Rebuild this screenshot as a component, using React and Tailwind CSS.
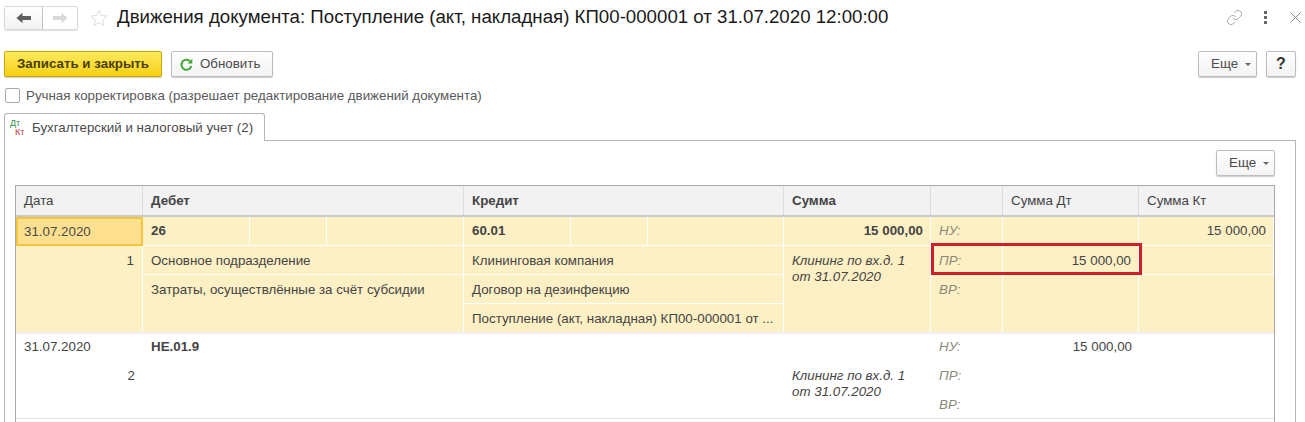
import React from "react";
import { Link as LinkIcon } from "lucide-react";

const gridCols = "grid grid-cols-[127px_321px_320px_147px_72px_136px_135px]";
const cell = "flex items-center px-2 border-r border-b border-white overflow-hidden whitespace-nowrap";

function Arrow({ dir, color }) {
  return (
    <svg width="16" height="12" viewBox="0 0 16 12" className={dir === "right" ? "rotate-180" : ""}>
      <path d="M0.5 6 L6.5 0.8 V4 H15 V8 H6.5 V11.2 Z" fill={color} />
    </svg>
  );
}

function MoreButton() {
  return (
    <button className="w-[59px] h-[26px] flex items-center pl-[12px] gap-[7px] border border-[#bdbdbd] rounded-[2px] bg-gradient-to-b from-white to-[#f3f3f3] shadow-[0_1px_1px_rgba(0,0,0,0.2)] text-[#4b4b4b]">
      Еще
      <span className="w-0 h-0 border-x-[3px] border-x-transparent border-t-[3px] border-t-[#666]" />
    </button>
  );
}

function Account({ col, code }) {
  return (
    <div className={`${col} row-start-1 grid grid-cols-[107px_77px_1fr] border-r border-b border-white`}>
      <div className="flex items-center pl-2 font-bold border-r border-white">{code}</div>
      <div className="border-r border-white" />
      <div />
    </div>
  );
}

export default function App() {
  return (
    <div className="w-[1305px] h-[422px] overflow-hidden bg-white text-[13.33px] text-[#444] font-['Liberation_Sans',Arial,sans-serif]">
      {/* title bar */}
      <div className="flex items-center h-[34px] pt-[1px] pl-1 pr-[4px]">
        <div className="flex w-[74px] h-[24px] border border-[#d9d9d9] rounded-[2px] shadow-[0_1px_1px_rgba(0,0,0,0.12)]">
          <div className="w-[38px] flex items-center justify-center border-r border-[#c4c4c4] bg-gradient-to-b from-white to-[#f2f2f2]">
            <Arrow color="#5f5f5f" />
          </div>
          <div className="flex-1 flex items-center justify-center">
            <Arrow dir="right" color="#d8d8d8" />
          </div>
        </div>
        <svg width="18" height="18" viewBox="0 0 18 18" className="ml-3">
          <path d="M9 1.2 L11.3 6.5 L17 7 L12.7 10.8 L14 16.5 L9 13.5 L4 16.5 L5.3 10.8 L1 7 L6.7 6.5 Z" fill="none" stroke="#dcdcdc" strokeWidth="1" />
        </svg>
        <h1 className="ml-[9px] text-[18.68px] text-[#1a1a1a] whitespace-nowrap">
          Движения документа: Поступление (акт, накладная) КП00-000001 от 31.07.2020 12:00:00
        </h1>
        <div className="ml-auto flex items-center">
          <LinkIcon size={17} strokeWidth={1} className="text-[#8a8a8a]" />
          <div className="ml-[21px] flex flex-col gap-[2px]">
            <span className="w-[3px] h-[3px] bg-[#666]" />
            <span className="w-[3px] h-[3px] bg-[#666]" />
            <span className="w-[3px] h-[3px] bg-[#666]" />
          </div>
          <svg width="11" height="11" viewBox="0 0 11 11" className="ml-[23px]">
            <path d="M0.5 0.5 L10.5 10.5 M10.5 0.5 L0.5 10.5" stroke="#8a8a8a" strokeWidth="1" />
          </svg>
        </div>
      </div>

      {/* command bar */}
      <div className="flex mt-[17px] pl-1 pr-[9px] h-[26px]">
        <button className="w-[158px] border border-[#c9a800] rounded-[2px] bg-gradient-to-b from-[#fdea5a] to-[#f6d000] shadow-[0_1px_1px_rgba(0,0,0,0.2)] font-bold text-[#4a3f00]">
          Записать и закрыть
        </button>
        <button className="ml-[9px] w-[102px] flex items-center pl-[8px] gap-[7px] border border-[#bdbdbd] rounded-[2px] bg-gradient-to-b from-white to-[#f3f3f3] shadow-[0_1px_1px_rgba(0,0,0,0.2)] text-[#4b4b4b]">
          <svg width="13" height="13" viewBox="0 0 13 13">
            <path d="M10.8 4.2 A5 5 0 1 0 11.3 8" fill="none" stroke="#3fa535" strokeWidth="2" />
            <path d="M12.3 0.8 V5.6 H7.5 Z" fill="#3fa535" />
          </svg>
          Обновить
        </button>
        <div className="ml-auto flex gap-[9px]">
          <MoreButton />
          <button className="w-[30px] border border-[#bdbdbd] rounded-[2px] bg-gradient-to-b from-white to-[#f3f3f3] shadow-[0_1px_1px_rgba(0,0,0,0.2)] font-bold text-[16px] text-[#333]">
            ?
          </button>
        </div>
      </div>

      {/* manual edit checkbox */}
      <div className="flex items-center mt-[10px] pl-[5px] h-[17px] text-[#5a5a5a]">
        <span className="w-[15px] h-[15px] border border-[#a9a9a9] rounded-[2px] bg-white" />
        <span className="ml-[6px]">Ручная корректировка (разрешает редактирование движений документа)</span>
      </div>

      {/* tab */}
      <div className="flex mt-[9px] pl-1 h-[28px]">
        <div className="relative z-10 w-[261px] h-[28px] flex items-center border border-b-0 border-[#b5b5b5] rounded-t-[3px] bg-white pl-[5px]">
          <div className="flex flex-col text-[9px] leading-[9px] w-[17px]">
            <span className="text-[#2e8b45]">Дт</span>
            <span className="ml-[5px] text-[#c23a3a]">Кт</span>
          </div>
          <span className="ml-[5px] text-[#4b4b4b]">Бухгалтерский и налоговый учет (2)</span>
        </div>
      </div>

      {/* tab panel */}
      <div className="mx-1 w-[1292px] h-[300px] -mt-[1px] border border-[#b5b5b5] pl-[10px] pr-[20px] pt-[9px]">
        <div className="flex justify-end">
          <MoreButton />
        </div>
        <div className="mt-[9px] w-[1260px] h-[300px] border border-[#a9a9a9]">
          {/* header */}
          <div className={`${gridCols} h-[31px] bg-[#f2f2f2] border-b-2 border-[#c9c9c9]`}>
            <div className="flex items-center px-2 border-r border-[#dcdcdc]">Дата</div>
            <div className="flex items-center px-2 border-r border-[#dcdcdc] font-bold">Дебет</div>
            <div className="flex items-center px-2 border-r border-[#dcdcdc] font-bold">Кредит</div>
            <div className="flex items-center px-2 border-r border-[#dcdcdc] font-bold">Сумма</div>
            <div className="border-r border-[#dcdcdc]" />
            <div className="flex items-center px-2 border-r border-[#dcdcdc]">Сумма Дт</div>
            <div className="flex items-center px-2">Сумма Кт</div>
          </div>

          {/* record 1 */}
          <div className={`${gridCols} relative grid-rows-[29px_29px_29px_28px] bg-[#fdf0c4] border-b-2 border-[#f0f0f0]`}>
            <div className="col-start-1 row-start-1 flex items-center pl-[6px] bg-[#fde08f] border-2 border-[#f5c63c] text-[#4a4a4a]">31.07.2020</div>
            <Account col="col-start-2" code="26" />
            <Account col="col-start-3" code="60.01" />
            <div className={`${cell} col-start-4 row-start-1 justify-end font-bold pr-[7px]`}>15 000,00</div>
            <div className={`${cell} col-start-5 row-start-1 italic text-[#8a8a7a]`}>НУ:</div>
            <div className={`${cell} col-start-6 row-start-1`} />
            <div className={`${cell} col-start-7 row-start-1 justify-end pr-[7px]`}>15 000,00</div>

            <div className="col-start-1 row-start-2 row-span-3 border-r border-white flex justify-end pt-[5px] pr-2">1</div>
            <div className={`${cell} pt-[1px] col-start-2 row-start-2`}>Основное подразделение</div>
            <div className={`${cell} pt-[1px] col-start-3 row-start-2`}>Клининговая компания</div>
            <div className="col-start-4 row-start-2 row-span-3 border-r border-white px-2 pt-[7px] italic leading-[16px]">
              Клининг по вх.д. 1<br />от 31.07.2020
            </div>
            <div className={`${cell} pt-[1px] col-start-5 row-start-2 italic text-[#8a8a7a]`}>ПР:</div>
            <div className={`${cell} pt-[1px] col-start-6 row-start-2 justify-end pr-[7px]`}>15 000,00</div>
            <div className={`${cell} col-start-7 row-start-2`} />

            <div className="col-start-2 row-start-3 row-span-2 border-r border-white px-2 pt-[5px]">
              Затраты, осуществлённые за счёт субсидии
            </div>
            <div className={`${cell} pt-[1px] col-start-3 row-start-3`}>Договор на дезинфекцию</div>
            <div className="col-start-5 row-start-3 row-span-2 border-r border-white px-2 pt-[5px] italic text-[#8a8a7a]">ВР:</div>
            <div className="col-start-6 row-start-3 row-span-2 border-r border-white" />
            <div className="col-start-7 row-start-3 row-span-2" />
            <div className="col-start-3 row-start-4 flex items-center px-2 pt-[1px] border-r border-white whitespace-nowrap overflow-hidden">
              Поступление (акт, накладная) КП00-000001 от ...
            </div>

            {/* red highlight over the ПР row */}
            <div className="absolute left-[915px] top-[26px] w-[211px] h-[32px] border-[3px] border-[#cf1f2e] pointer-events-none" />
          </div>

          {/* record 2 */}
          <div className={`${gridCols} grid-rows-[26px_31px_27px] border-b border-[#e3e3e3]`}>
            <div className="flex items-center px-2">31.07.2020</div>
            <div className="flex items-center px-2 font-bold">НЕ.01.9</div>
            <div className="col-start-5 flex items-center px-2 italic text-[#8a8a7a]">НУ:</div>
            <div className="flex items-center justify-end pr-[7px]">15 000,00</div>

            <div className="col-start-1 row-start-2 flex items-center justify-end px-2">2</div>
            <div className="col-start-4 row-start-2 row-span-2 px-2 pt-[8px] italic leading-[16px]">
              Клининг по вх.д. 1<br />от 31.07.2020
            </div>
            <div className="col-start-5 row-start-2 flex items-center px-2 italic text-[#8a8a7a]">ПР:</div>
            <div className="col-start-5 row-start-3 flex items-center px-2 italic text-[#8a8a7a]">ВР:</div>
          </div>
        </div>
      </div>
    </div>
  );
}
